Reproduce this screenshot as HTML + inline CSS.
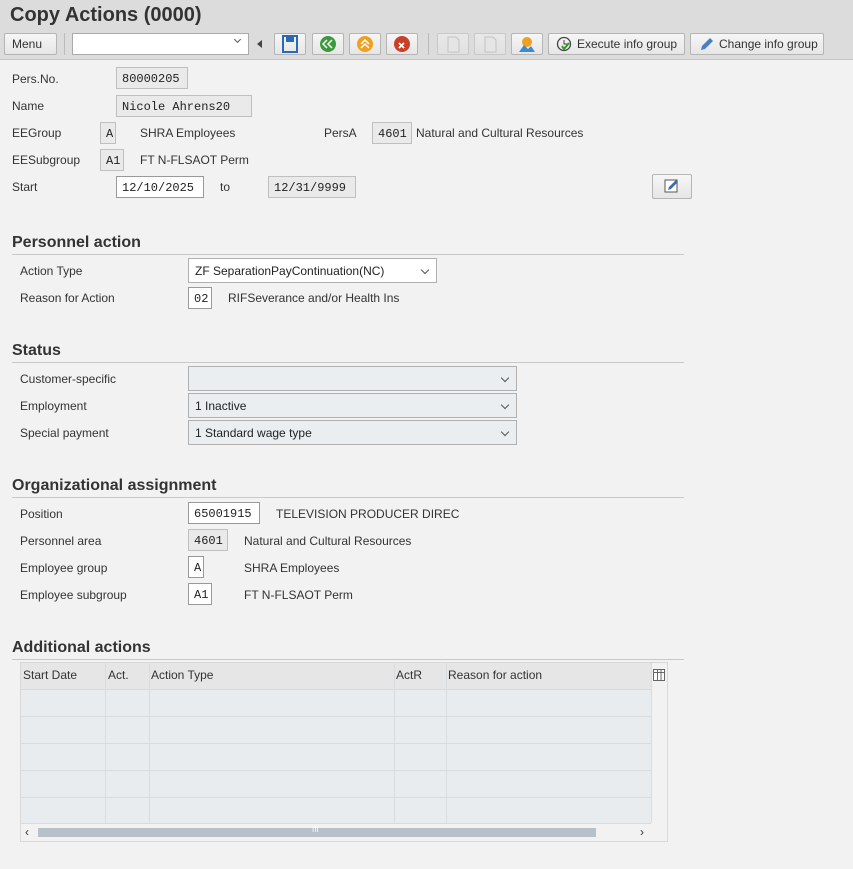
<!DOCTYPE html>
<html><head><meta charset="utf-8"><style>
*{box-sizing:border-box;margin:0;padding:0}
body{width:853px;height:869px;background:#f2f2f2;font-family:"Liberation Sans",Arial,sans-serif;font-size:12px;color:#333;position:relative;overflow:hidden}
.a{position:absolute}
.title{left:0;top:0;width:853px;height:30px;background:#dcdcdc}
.title span{position:absolute;left:10px;top:4px;font-size:20px;font-weight:bold;color:#333}
.tb{left:0;top:30px;width:853px;height:30px;background:#dcdcdc;border-bottom:1px solid #c8c8c8}
.btn{position:absolute;top:3px;height:22px;border:1px solid #b5b5b5;background:linear-gradient(#f6f6f6,#e6e6e6);border-radius:2px;font-size:12px;color:#333}
.lbl{position:absolute;font-size:12px;color:#333}
.in{position:absolute;height:22px;border:1px solid #bfbfbf;background:#eaeaea;font-family:"Liberation Mono",monospace;font-size:12px;padding:4px 0 0 5px;color:#222}
.w{background:#fff;border-color:#999}
.dd{position:absolute;height:25px;border:1px solid #b0b0b0;background:#eaeef0;font-size:12px;padding:5px 0 0 6px;color:#222}
.dd.w{background:#fff}
.dd:after{content:"";position:absolute;right:8px;top:8px;width:5px;height:5px;border-right:1.5px solid #555;border-bottom:1.5px solid #555;transform:rotate(45deg)}
.h{position:absolute;left:12px;font-size:16px;font-weight:bold;color:#333}
.line{position:absolute;left:12px;width:672px;height:1px;background:#c8c8c8}
.vl{position:absolute;top:662px;width:1px;height:161px;background:#d8dcdf}
.hl{position:absolute;left:21px;width:630px;height:1px;background:#d8dcdf}
</style></head><body>
<div class="a title"><span>Copy Actions (0000)</span></div>
<div class="a tb">
<div class="btn" style="left:4px;width:53px;padding:3px 0 0 7px">Menu</div>
<div class="a" style="left:64px;top:3px;width:1px;height:22px;background:#bbb"></div>
<div class="a" style="left:72px;top:3px;width:177px;height:22px;background:#fff;border:1px solid #aaa"><span style="position:absolute;right:8px;top:3px;width:5px;height:5px;border-right:1.5px solid #555;border-bottom:1.5px solid #555;transform:rotate(45deg)"></span></div>
<div class="a" style="left:257px;top:10px;width:0;height:0;border-top:4px solid transparent;border-bottom:4px solid transparent;border-right:5px solid #444"></div>
<div class="btn" style="left:274px;width:32px"><svg width="30" height="20"><rect x="8" y="2" width="14" height="16" fill="none" stroke="#2a6ab4" stroke-width="2"/><rect x="11" y="3" width="8" height="5" fill="#2a6ab4"/></svg></div>
<div class="btn" style="left:312px;width:32px"><svg width="30" height="20"><circle cx="15" cy="10" r="8" fill="#3c9a3c"/><path d="M14 6l-4 4 4 4M19 6l-4 4 4 4" stroke="#fff" stroke-width="1.5" fill="none"/></svg></div>
<div class="btn" style="left:349px;width:32px"><svg width="30" height="20"><circle cx="15" cy="10" r="8" fill="#f0a020"/><path d="M11 10l4-4 4 4M11 14l4-4 4 4" stroke="#fff" stroke-width="1.5" fill="none"/></svg></div>
<div class="btn" style="left:386px;width:32px"><svg width="30" height="20"><circle cx="15" cy="10" r="8" fill="#c8402a"/><path d="M12 9l5 5M17 9l-5 5" stroke="#fff" stroke-width="1.8"/></svg></div>
<div class="a" style="left:428px;top:3px;width:1px;height:22px;background:#bbb"></div>
<div class="btn" style="left:437px;width:32px;opacity:.5"><svg width="30" height="20"><path d="M10 3h8l3 3v12H10z" fill="#eee" stroke="#aaa"/></svg></div>
<div class="btn" style="left:474px;width:32px;opacity:.5"><svg width="30" height="20"><path d="M10 3h8l3 3v12H10z" fill="#eee" stroke="#aaa"/></svg></div>
<div class="btn" style="left:511px;width:32px"><svg width="30" height="20"><circle cx="15" cy="8" r="5" fill="#f0a020"/><path d="M7 18l5-7 4 4 3-3 4 6z" fill="#3c8ad0"/></svg></div>
<div class="btn" style="left:548px;width:137px;padding:3px 0 0 28px">Execute info group<svg style="position:absolute;left:7px;top:2px" width="16" height="16"><circle cx="8" cy="8" r="6.5" fill="none" stroke="#444" stroke-width="1.3"/><path d="M8 4v4h3" stroke="#444" fill="none"/><path d="M6 10l2 3 5-6" stroke="#2a9a2a" stroke-width="2" fill="none"/></svg></div>
<div class="btn" style="left:690px;width:134px;padding:3px 0 0 28px">Change info group<svg style="position:absolute;left:7px;top:2px" width="16" height="16"><path d="M3 14l1-4 8-8 3 3-8 8z" fill="#4a80c0"/></svg></div>
</div>

<div class="lbl" style="left:12px;top:72px">Pers.No.</div><div class="in" style="left:116px;top:67px;width:72px">80000205</div>
<div class="lbl" style="left:12px;top:99px">Name</div><div class="in" style="left:116px;top:95px;width:136px">Nicole Ahrens20</div>
<div class="lbl" style="left:12px;top:126px">EEGroup</div><div class="in" style="left:100px;top:122px;width:16px">A</div>
<div class="lbl" style="left:140px;top:126px">SHRA Employees</div>
<div class="lbl" style="left:324px;top:126px">PersA</div><div class="in" style="left:372px;top:122px;width:40px">4601</div>
<div class="lbl" style="left:416px;top:126px">Natural and Cultural Resources</div>
<div class="lbl" style="left:12px;top:153px">EESubgroup</div><div class="in" style="left:100px;top:149px;width:24px">A1</div>
<div class="lbl" style="left:140px;top:153px">FT N-FLSAOT Perm</div>
<div class="lbl" style="left:12px;top:180px">Start</div><div class="in w" style="left:116px;top:176px;width:88px">12/10/2025</div>
<div class="lbl" style="left:220px;top:180px">to</div><div class="in" style="left:268px;top:176px;width:88px">12/31/9999</div>
<div class="btn" style="left:652px;top:174px;width:40px;height:25px"><svg width="38" height="22"><rect x="12" y="5" width="12" height="12" fill="#fff" stroke="#555"/><path d="M15 15l1-3 7-7 2 2-7 7z" fill="#3a6ab0"/></svg></div>

<div class="h" style="top:234px">Personnel action</div><div class="line" style="top:254px"></div>
<div class="lbl" style="left:20px;top:264px">Action Type</div><div class="dd w" style="left:188px;top:258px;width:249px">ZF SeparationPayContinuation(NC)</div>
<div class="lbl" style="left:20px;top:291px">Reason for Action</div><div class="in w" style="left:188px;top:287px;width:24px">02</div>
<div class="lbl" style="left:228px;top:291px">RIFSeverance and/or Health Ins</div>

<div class="h" style="top:342px">Status</div><div class="line" style="top:362px"></div>
<div class="lbl" style="left:20px;top:372px">Customer-specific</div><div class="dd" style="left:188px;top:366px;width:329px"></div>
<div class="lbl" style="left:20px;top:399px">Employment</div><div class="dd" style="left:188px;top:393px;width:329px">1 Inactive</div>
<div class="lbl" style="left:20px;top:426px">Special payment</div><div class="dd" style="left:188px;top:420px;width:329px">1 Standard wage type</div>

<div class="h" style="top:477px">Organizational assignment</div><div class="line" style="top:497px"></div>
<div class="lbl" style="left:20px;top:507px">Position</div><div class="in w" style="left:188px;top:502px;width:72px">65001915</div>
<div class="lbl" style="left:276px;top:507px">TELEVISION PRODUCER DIREC</div>
<div class="lbl" style="left:20px;top:534px">Personnel area</div><div class="in" style="left:188px;top:529px;width:40px">4601</div>
<div class="lbl" style="left:244px;top:534px">Natural and Cultural Resources</div>
<div class="lbl" style="left:20px;top:561px">Employee group</div><div class="in w" style="left:188px;top:556px;width:16px">A</div>
<div class="lbl" style="left:244px;top:561px">SHRA Employees</div>
<div class="lbl" style="left:20px;top:588px">Employee subgroup</div><div class="in w" style="left:188px;top:583px;width:24px">A1</div>
<div class="lbl" style="left:244px;top:588px">FT N-FLSAOT Perm</div>

<div class="h" style="top:639px">Additional actions</div><div class="line" style="top:659px"></div>
<div class="a" style="left:20px;top:662px;width:648px;height:180px;border:1px solid #d8d8d8;background:#f2f2f2"></div>
<div class="a" style="left:21px;top:663px;width:630px;height:26px;background:#e6e6e6"></div>
<div class="a" style="left:21px;top:689px;width:630px;height:134px;background:#e8ecee"></div>
<div class="vl" style="left:105px"></div><div class="vl" style="left:149px"></div><div class="vl" style="left:394px"></div><div class="vl" style="left:446px"></div><div class="vl" style="left:651px"></div>
<div class="hl" style="top:689px"></div><div class="hl" style="top:716px"></div><div class="hl" style="top:743px"></div><div class="hl" style="top:770px"></div><div class="hl" style="top:797px"></div><div class="hl" style="top:823px"></div>
<div class="lbl" style="left:23px;top:668px">Start Date</div><div class="lbl" style="left:108px;top:668px">Act.</div><div class="lbl" style="left:151px;top:668px">Action Type</div><div class="lbl" style="left:396px;top:668px">ActR</div><div class="lbl" style="left:448px;top:668px">Reason for action</div>
<svg class="a" style="left:653px;top:669px" width="12" height="12"><rect x="0.5" y="0.5" width="11" height="11" fill="#fff" stroke="#666"/><path d="M0 3.5h12M4.5 0v12M8 0v12" stroke="#666"/></svg>
<div class="lbl" style="left:25px;top:825px;font-size:12px">‹</div>
<div class="a" style="left:38px;top:828px;width:558px;height:9px;background:#b8c0ca"></div>
<div class="lbl" style="left:312px;top:825px;font-size:8px;color:#fff">III</div>
<div class="lbl" style="left:640px;top:825px;font-size:12px">›</div>
</body></html>
